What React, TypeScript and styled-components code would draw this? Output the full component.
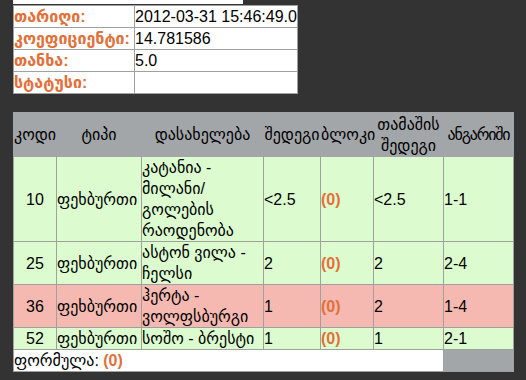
import React from 'react'
import styled, { createGlobalStyle } from 'styled-components'

const GlobalStyle = createGlobalStyle`
  html, body {
    margin: 0;
    background: #333333;
  }
  body {
    font-family: 'Liberation Sans', 'DejaVu Sans', sans-serif;
    font-size: 16px;
    color: #000;
  }
`

interface Match {
  code: string
  type: string
  name: string
  result: string
  game: string
  score: string
  lost?: boolean
}

const matches: Match[] = [
  { code: '10', type: 'ფეხბურთი', name: 'კატანია - მილანი/ გოლების რაოდენობა', result: '<2.5', game: '<2.5', score: '1-1' },
  { code: '25', type: 'ფეხბურთი', name: 'ასტონ ვილა - ჩელსი', result: '2', game: '2', score: '2-4' },
  { code: '36', type: 'ფეხბურთი', name: 'ჰერტა - ვოლფსბურგი', result: '1', game: '2', score: '1-4', lost: true },
  { code: '52', type: 'ფეხბურთი', name: 'სოშო - ბრესტი', result: '1', game: '1', score: '2-1' },
]

const info = [
  { label: 'თარიღი:', value: '2012-03-31 15:46:49.0' },
  { label: 'კოეფიციენტი:', value: '14.781586' },
  { label: 'თანხა:', value: '5.0' },
  { label: 'სტატუსი:', value: '' },
]

export default function App() {
  return (
    <Page>
      <GlobalStyle />
      <TopStrip />
      <InfoTable>
        <colgroup>
          <col style={{ width: 121 }} />
          <col style={{ width: 163 }} />
        </colgroup>
        <tbody>
          {info.map((row) => (
            <tr key={row.label}>
              <Label>{row.label}</Label>
              <Value>{row.value}</Value>
            </tr>
          ))}
        </tbody>
      </InfoTable>
      <BetTable>
        <colgroup>
          {[43, 85, 122, 57, 53, 70, 70].map((w, i) => (
            <col key={i} style={{ width: w }} />
          ))}
        </colgroup>
        <thead>
          <tr>
            <Head>კოდი</Head>
            <Head>ტიპი</Head>
            <Head>დასახელება</Head>
            <Head>შედეგი</Head>
            <Head>ბლოკი</Head>
            <Head>თამაშის შედეგი</Head>
            <Head tight>ანგარიში</Head>
          </tr>
        </thead>
        <tbody>
          {matches.map((m) => (
            <Row key={m.code} lost={m.lost}>
              <Cell center>{m.code}</Cell>
              <Cell>{m.type}</Cell>
              <Cell>{m.name}</Cell>
              <Cell>{m.result}</Cell>
              <Cell><Zero>(0)</Zero></Cell>
              <Cell>{m.game}</Cell>
              <Cell>{m.score}</Cell>
            </Row>
          ))}
          <tr>
            <Footer colSpan={6}>
              ფორმულა: <Zero>(0)</Zero>
            </Footer>
            <FooterGray />
          </tr>
        </tbody>
      </BetTable>
    </Page>
  )
}

const Page = styled.div`
  padding: 0 13px;
`
const TopStrip = styled.div`
  width: 230px;
  height: 4px;
  background: #fff;
  margin-bottom: 1px;
`
const InfoTable = styled.table`
  width: 284px;
  table-layout: fixed;
  border-collapse: collapse;
  background: #fff;
  border: 1px solid #a0a0a0;
`
const Label = styled.td`
  border: 1px solid #a0a0a0;
  padding: 0;
  line-height: 21px;
  color: #e2703a;
  font-weight: bold;
  white-space: nowrap;
`
const Value = styled.td`
  border: 1px solid #a0a0a0;
  padding: 0;
  line-height: 21px;
  white-space: nowrap;
`
const BetTable = styled.table`
  margin-top: 18px;
  width: 500px;
  table-layout: fixed;
  border-collapse: collapse;
`
const Head = styled.th<{ tight?: boolean }>`
  background: #a3a6a9;
  border: 1px solid #a3a6a9;
  font-weight: normal;
  height: 43px;
  padding: 0;
  line-height: 21px;
  text-align: center;
  white-space: ${({ tight }) => (tight ? 'nowrap' : 'normal')};
  letter-spacing: ${({ tight }) => (tight ? '-1.2px' : '0')};
`
const Row = styled.tr<{ lost?: boolean }>`
  background: ${({ lost }) => (lost ? '#f6b9b1' : '#dcfcd0')};
`
const Cell = styled.td<{ center?: boolean }>`
  border: 1px solid #a0a0a0;
  padding: 0;
  line-height: 21px;
  text-align: ${({ center }) => (center ? 'center' : 'left')};
  vertical-align: middle;
`
const Zero = styled.span`
  color: #e2703a;
  font-weight: bold;
`
const Footer = styled.td`
  background: #fff;
  border: 1px solid #a0a0a0;
  padding: 0;
  line-height: 21px;
`
const FooterGray = styled.td`
  background: #a3a6a9;
  border: 1px solid #a0a0a0;
  padding: 0;
`
